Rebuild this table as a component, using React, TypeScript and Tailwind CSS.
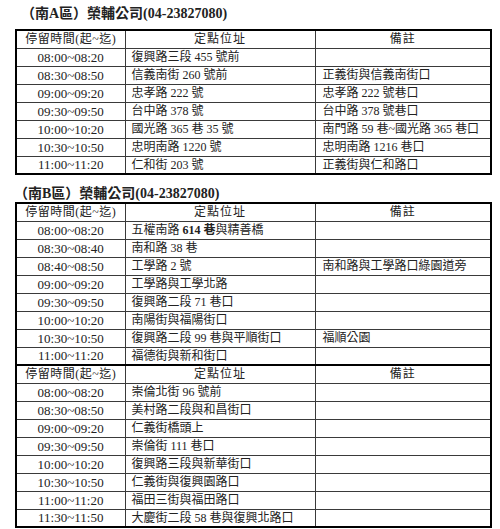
import type { ReactNode } from 'react';

type Stop = { time: string; place: ReactNode; note?: string };

const routeA: Stop[] = [
  { time: '08:00~08:20', place: '復興路三段 455 號前' },
  { time: '08:30~08:50', place: '信義南街 260 號前', note: '正義街與信義南街口' },
  { time: '09:00~09:20', place: '忠孝路 222 號', note: '忠孝路 222 號巷口' },
  { time: '09:30~09:50', place: '台中路 378 號', note: '台中路 378 號巷口' },
  { time: '10:00~10:20', place: '國光路 365 巷 35 號', note: '南門路 59 巷~國光路 365 巷口' },
  { time: '10:30~10:50', place: '忠明南路 1220 號', note: '忠明南路 1216 巷口' },
  { time: '11:00~11:20', place: '仁和街 203 號', note: '正義街與仁和路口' },
];

const routeB1: Stop[] = [
  {
    time: '08:00~08:20',
    place: (
      <>
        五權南路 <span className="font-bold">614 巷</span>與精善橋
      </>
    ),
  },
  { time: '08:30~08:40', place: '南和路 38 巷' },
  { time: '08:40~08:50', place: '工學路 2 號', note: '南和路與工學路口綠園道旁' },
  { time: '09:00~09:20', place: '工學路與工學北路' },
  { time: '09:30~09:50', place: '復興路二段 71 巷口' },
  { time: '10:00~10:20', place: '南陽街與福陽街口' },
  { time: '10:30~10:50', place: '復興路二段 99 巷與平順街口', note: '福順公園' },
  { time: '11:00~11:20', place: '福德街與新和街口' },
];

const routeB2: Stop[] = [
  { time: '08:00~08:20', place: '崇倫北街 96 號前' },
  { time: '08:30~08:50', place: '美村路二段與和昌街口' },
  { time: '09:00~09:20', place: '仁義街橋頭上' },
  { time: '09:30~09:50', place: '崇倫街 111 巷口' },
  { time: '10:00~10:20', place: '復興路三段與新華街口' },
  { time: '10:30~10:50', place: '仁義街與復興園路口' },
  { time: '11:00~11:20', place: '福田三街與福田路口' },
  { time: '11:30~11:50', place: '大慶街二段 58 巷與復興北路口' },
];

const cell = 'h-[18px] p-0 border border-[#3a3a3a] align-middle whitespace-nowrap';

function HeaderRow({ thick }: { thick?: boolean }) {
  const top = thick ? ' border-t-2 border-t-black' : '';
  return (
    <tr>
      <td className={`${cell}${top} text-center text-[12px] tracking-[0.5px]`}>停留時間(起~迄)</td>
      <td className={`${cell}${top} text-center text-[12px] tracking-[1px]`}>定點位址</td>
      <td className={`${cell}${top} text-center text-[12px] tracking-[1px]`}>備註</td>
    </tr>
  );
}

function StopRows({ stops }: { stops: Stop[] }) {
  return (
    <>
      {stops.map((s) => (
        <tr key={s.time}>
          <td className={`${cell} text-center text-[13px]`}>{s.time}</td>
          <td className={`${cell} pl-[6px] text-[12px]`}>{s.place}</td>
          <td className={`${cell} pl-[7px] text-[12px]`}>{s.note ?? ''}</td>
        </tr>
      ))}
    </>
  );
}

function Schedule({ children }: { children: ReactNode }) {
  return (
    <table className="ml-[15px] w-[475px] table-fixed border-collapse border-2 border-black">
      <colgroup>
        <col className="w-[109px]" />
        <col className="w-[190px]" />
        <col className="w-[176px]" />
      </colgroup>
      <tbody>{children}</tbody>
    </table>
  );
}

export default function App() {
  return (
    <div className="w-[500px] h-[529px] bg-white text-[#222] font-['Liberation_Serif','Noto_Sans_CJK_TC',serif] leading-none">
      <h2 className="pt-[5px] pl-[21px] h-[23px] text-[14px] leading-[18px] font-bold">
        （南A區）榮輔公司(04-23827080)
      </h2>
      <div className="mt-[6px]">
        <Schedule>
          <HeaderRow />
          <StopRows stops={routeA} />
        </Schedule>
      </div>
      <h2 className="mt-[11px] pl-[14px] h-[16px] text-[14px] leading-[16px] font-bold">
        （南B區）榮輔公司(04-23827080)
      </h2>
      <Schedule>
        <HeaderRow />
        <StopRows stops={routeB1} />
        <HeaderRow thick />
        <StopRows stops={routeB2} />
      </Schedule>
    </div>
  );
}
